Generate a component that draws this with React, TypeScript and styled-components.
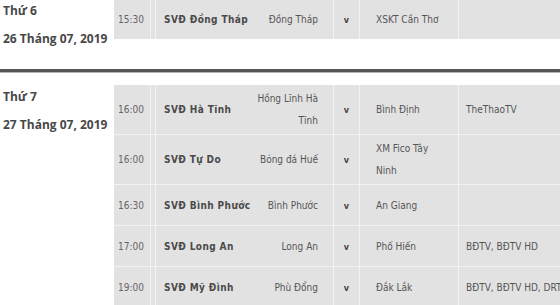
import React from 'react';
import styled, { createGlobalStyle } from 'styled-components';

interface Match {
  time: string
  stadium: string
  home: string
  away: string
  tv?: string
}

interface Day {
  weekday: string
  date: string
  matches: Array<Match>
}

const days: Array<Day> = [
  {
    weekday: 'Thứ 6',
    date: '26 Tháng 07, 2019',
    matches: [
      { time: '15:30', stadium: 'SVĐ Đồng Tháp', home: 'Đồng Tháp', away: 'XSKT Cần Thơ' },
    ],
  },
  {
    weekday: 'Thứ 7',
    date: '27 Tháng 07, 2019',
    matches: [
      { time: '16:00', stadium: 'SVĐ Hà Tĩnh', home: 'Hồng Lĩnh Hà Tĩnh', away: 'Bình Định', tv: 'TheThaoTV' },
      { time: '16:00', stadium: 'SVĐ Tự Do', home: 'Bóng đá Huế', away: 'XM Fico Tây Ninh' },
      { time: '16:30', stadium: 'SVĐ Bình Phước', home: 'Bình Phước', away: 'An Giang' },
      { time: '17:00', stadium: 'SVĐ Long An', home: 'Long An', away: 'Phố Hiến', tv: 'BĐTV, BĐTV HD' },
      { time: '19:00', stadium: 'SVĐ Mỹ Đình', home: 'Phù Đổng', away: 'Đắk Lắk', tv: 'BĐTV, BĐTV HD, DRT' },
    ],
  },
];

const GlobalStyle = createGlobalStyle`
  html, body {
    margin: 0;
    padding: 0;
    overflow: hidden;
    background: #fff;
  }
`

const Page = styled.div`
  margin-top: -13px;
  width: 640px;
`

const Section = styled.div`
  display: flex;
  align-items: flex-start;
  padding: 12px 0 20px;
  border-bottom: 3px solid #555;
  box-shadow: 0 1px 0 #b5b5b5;
  margin-bottom: 1px;
`

const DayLabel = styled.div`
  width: 111px;
  padding: 2px 0 0 3px;
  display: flex;
  flex-direction: column;
  gap: 8px;
  font-family: "Open Sans", "Liberation Sans", sans-serif;
  font-weight: 700;
  font-size: 12px;
  line-height: 20px;
  color: #484848;
  white-space: nowrap;
`

const Table = styled.div`
  flex: 1;
  display: flex;
  flex-direction: column;
  background: #e2e2e2;
  font-family: "DejaVu Sans Condensed", "DejaVu Sans", sans-serif;
  font-stretch: condensed;
  font-size: 10px;
  line-height: 22px;
  color: #555;
`

const Row = styled.div`
  display: grid;
  grid-template-columns: 37px 5px 94px 84px 26px 99px 1fr;
  min-height: 40px;
  border-bottom: 1px solid #f2f2f2;
  &:last-child {
    border-bottom: none;
  }
`

interface CellProps {
  $line?: boolean
  $align?: 'left' | 'right' | 'center'
  $padL?: number
  $padR?: number
}

const Cell = styled.div<CellProps>`
  display: flex;
  flex-direction: column;
  justify-content: center;
  padding: 3px ${p => p.$padR ?? 4}px 2px ${p => p.$padL ?? 4}px;
  text-align: ${p => p.$align ?? 'left'};
  border-right: ${p => p.$line ? '1px solid #f2f2f2' : 'none'};
`

const Time = styled(Cell)`
  color: #666;
`

const Stadium = styled(Cell)`
  color: #4a4a4a;
  font-weight: 700;
  letter-spacing: 0.4px;
  white-space: nowrap;
`

const Versus = styled(Cell)`
  color: #444;
  font-size: 9px;
  font-weight: 700;
`

const Tv = styled(Cell)`
  white-space: nowrap;
`

const App: React.FC = () => {
  return (
    <>
      <GlobalStyle />
      <Page>
        {days.map((day) => (
          <Section key={day.date}>
            <DayLabel>
              <span>{day.weekday}</span>
              <span>{day.date}</span>
            </DayLabel>
            <Table>
              {day.matches.map((m, i) => (
                <Row key={i}>
                  <Time $line>{m.time}</Time>
                  <Cell $line $padL={0} $padR={0} />
                  <Stadium $padL={8}>{m.stadium}</Stadium>
                  <Cell $line $align="right" $padL={0} $padR={15}>{m.home}</Cell>
                  <Versus $line $align="center" $padL={0} $padR={0}>v</Versus>
                  <Cell $line $padL={16} $padR={14}>{m.away}</Cell>
                  <Tv $padL={7}>{m.tv ?? ''}</Tv>
                </Row>
              ))}
            </Table>
          </Section>
        ))}
      </Page>
    </>
  );
};

export default App;
